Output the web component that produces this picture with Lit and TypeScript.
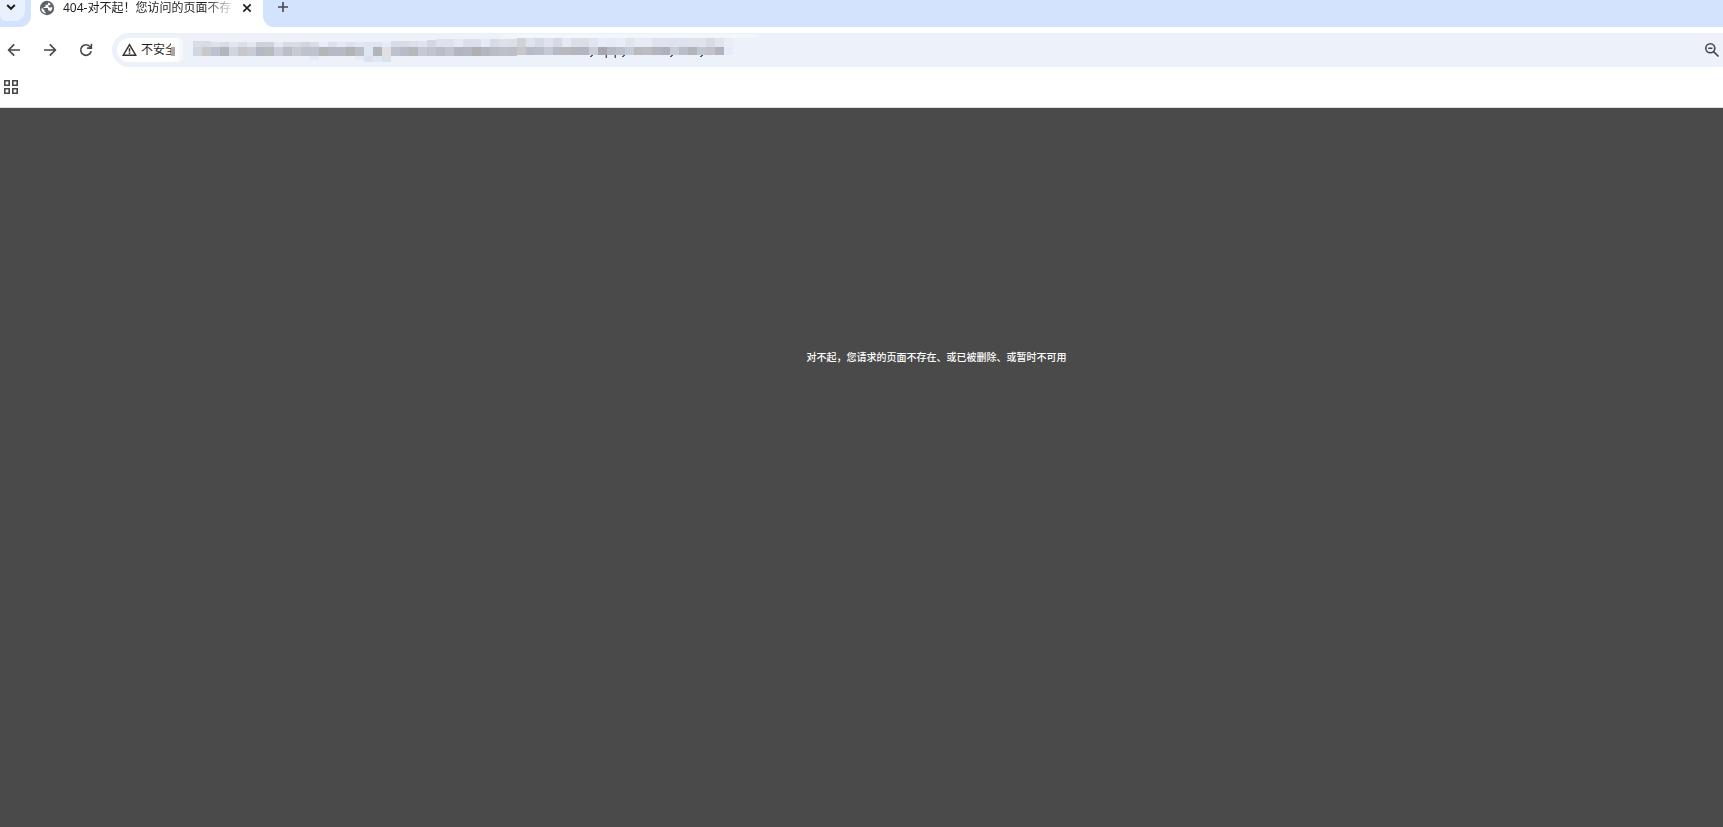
import { LitElement, html, svg, css } from "lit";
import { customElement } from "lit/decorators.js";

const CELL = 9;

// One column per cell: top edge, upper colour, main colour.
const UPPER_TOPS = [5,5,6,6,6,6,6,6,6,6,6,6,6,6,6,6,6,6,6,6,6,6,5,5,5,5,4,3,3,3,3,3,3,3,3,3,2,2,2,2,2,2,2,2,2,2,2,2,2,2,2,2,2,2,2,2,2,2,2,2];
const UPPER = ("d9dde5 d8dbe3 dde1ea d8dce5 e2e6f0 dadee7 e3e7f1 cdd1da cfd3dc e4e8f2 d7dbe4 d8dce5 d2d6df d9dde7 e8ecf8 dce1eb e5e9f5 dde1eb e3e7f1 dfe6f3 " +
  "dfe4ee e5ebf7 d8dce6 d8dce6 dce0ea dee3ee d3d7e1 dee2ec dde2ec e5e9f5 dadfe9 dadfe9 e5eaf7 d7dbe5 dde1eb dcdfe8 d2d3d9 dfe3ee d6dae4 dee3ee " +
  "d6dae4 e6e9f3 dcdfe8 dadee7 dde5ef e7ecf8 e5eaf5 e8edf9 dfe4ed e7ebf6 e7ebf6 dfe3ed dfe3ed dde2ee dde2ee dee3ed dfe3ed d8dbe4 e0e4ed e8edf8").split(" ");
const MAIN = ("d2d6de cac9ca bcc2cd b1b5be d1d5de c6c6cb c8ccd5 b4b9c3 b9bcbf cacdd8 babec8 c8cad1 bec2cc bec2cc b5b6b7 b5bac5 b5bac5 b2b3b6 babec9 dfe6f3 " +
  "b1b4b9 dfdfe4 bdc2cc b8bcc7 b5b7bb c7cad4 c0c4ce babdc8 c2c5cb b3b6c0 b4b8c3 b0afb2 b1b6c1 b9bcc1 bdc0c7 bcbfc6 c9c6ca b5bbc8 babec9 c4c9d5 " +
  "b7bac4 b7b9bd b4b6bb b3b6c0 cbced6 a8a5ad b5b9c3 bac1ca c5cbd8 b8babb bbbdc3 b4b6bd aeb1bb c9cdd4 b8bdc9 b2b4ba c0c7d0 c1c3c9 b1b4be e6ebf7").split(" ");
const LOWER: [number, string][] = [[13, "e6eaf5"], [18, "e6ebf6"], [19, "dce1ec"], [20, "e0e8f2"], [21, "dce2ec"]];
const COMMAS = [398, 430, 478, 508];
const STEMS = [413, 422];

@customElement("app-root")
export class AppRoot extends LitElement {
  static styles = css`
    :host {
      display: flex;
      flex-direction: column;
      min-height: 100vh;
      background: #fff;
      color: #1f1f1f;
      font: 12px/16px "Noto Sans", "Noto Sans CJK SC", sans-serif;
    }
    button {
      display: grid;
      place-items: center;
      flex: none;
      padding: 0;
      border: 0;
      background: none;
      color: #474747;
      font: inherit;
    }
    svg { display: block; flex: none; }
    .strip { display: flex; height: 27px; }
    .before, .after { background: #d3e3fd; }
    .before { width: 31px; flex: none; border-radius: 0 0 11px 0; }
    .after { flex: 1; border-radius: 0 0 0 11px; padding-left: 10px; }
    .search {
      width: 25px;
      height: 21px;
      padding-right: 3px;
      padding-bottom: 7px;
      border-radius: 0 0 10px 6px;
      background: #e9f1fe;
      color: #1f1f1f;
    }
    .new { width: 20px; height: 14px; }
    .tab {
      display: flex;
      align-items: center;
      flex: none;
      width: 224px;
      height: 15px;
      padding: 0 0 0 8px;
    }
    .title {
      width: 168px;
      margin: 0 8px;
      white-space: nowrap;
      mask-image: linear-gradient(to right, #000 142px, transparent 172px);
    }
    .close { width: 16px; height: 15px; color: #1f1f1f; }
    .toolbar { display: flex; align-items: center; padding: 6px 0 0 4px; }
    .nav { display: flex; gap: 16px; margin-right: 16px; }
    .nav button { width: 20px; height: 20px; }
    .address {
      display: flex;
      align-items: center;
      flex: 1;
      height: 34px;
      padding: 0 2px 0 5px;
      border-radius: 17px 0 0 17px;
      background: #ecf1fa;
    }
    .chip {
      position: relative;
      width: 66px;
      height: 24px;
      display: flex;
      gap: 4px;
      padding-left: 5px;
      border-radius: 12px 5px 5px 12px;
      background: linear-gradient(to right, #fff 58px, #f6f8fc 58px);
      color: #1f1f1f;
    }
    .chip::after {
      content: "";
      position: absolute;
      left: 54px;
      top: 0;
      width: 8px;
      height: 24px;
      background: linear-gradient(#fff 9px, #a6a6a8 9px 18px, #fff 18px) 0 0 / 4px 24px no-repeat, #fbfcfe;
    }
    .chip svg { color: #333; }
    .safety { width: 36px; white-space: nowrap; }
    .redacted { margin-left: 10px; }
    .zoom { width: 18px; height: 20px; margin-left: auto; }
    .bookmarks {
      display: flex;
      height: 40px;
      padding-left: 2px;
      align-items: center;
      border-bottom: 1px solid #dfe0e0;
    }
    .bookmarks button { width: 18px; height: 18px; }
    main {
      flex: 1;
      padding: 241px 0 0 150px;
      background: #4a4a4a;
      color: #fff;
      text-align: center;
    }
    h1 { margin: 0; font-size: 10px; line-height: 16px; font-weight: 500; }
  `;

  private mosaic() {
    return svg`
      <rect x="310" y="1" width="253" height="4" rx="2" fill="#f2f6fd" />
      ${UPPER.map((c, i) => svg`<rect x=${i * CELL} y=${UPPER_TOPS[i] + 3} width=${CELL} height=${11 - UPPER_TOPS[i]} fill=${"#" + c} />`)}
      ${MAIN.map((c, i) => svg`<rect x=${i * CELL} y="14" width=${CELL} height=${i < 36 ? 9 : 8} fill=${"#" + c} />`)}
      ${LOWER.map(([i, c]) => svg`<rect x=${i * CELL} y="23" width=${CELL} height=${i < 19 ? 4 : 6} fill=${"#" + c} />`)}
      ${COMMAS.map((x) => svg`<path d="M${x} 22h2v1h-1v1h-2v-1h1z" fill="#4c5874" />`)}
      ${STEMS.map((x) => svg`<rect x=${x - 1} y="22" width="1" height="3" fill="#d2b08a" /><rect x=${x} y="22" width="1" height="3" fill="#40567f" />`)}
    `;
  }

  render() {
    return html`
      <div class="strip">
        <div class="before">
          <button class="search" aria-label="搜索标签页">
            <svg width="10" height="8" viewBox="0 0 10 8" fill="none" stroke="currentColor" stroke-width="2"><path d="M1.2 2 5 5.8 8.8 2" /></svg>
          </button>
        </div>
        <div class="tab">
          <svg width="16" height="16" viewBox="0 0 16 16"><circle cx="8" cy="8" r="7.2" fill="#5f6368" /><path d="M9.200 2.500v1c0 .8-.6 1.300-1.400 1.300H6.600v1.300c0 .5-.3.800-.7.800H4.700v1.200h3.600c.5 0 .8.300.8.800v1.700h.8c.6 0 1.100.4 1.300 1A5.500 5.500 0 0 0 13.400 8l-.2-1c-.4.3-.9.4-1.400.4h-1.200c-.8 0-1.300-.6-1.300-1.300v-.8h2V3.500A6 6 0 0 0 9.200 2.500ZM2.500 7.500 5.500 10.300v.7c0 .8.5 1.400 1.300 1.400v1.100A5.500 5.500 0 0 1 2.500 7.500Z" fill="#fff" /></svg>
          <span class="title">404-对不起！您访问的页面不存</span>
          <button class="close" aria-label="关闭">
            <svg width="10" height="10" viewBox="0 0 10 10" stroke="currentColor" stroke-width="1.7"><path d="m1.300 1.300 7.400 7.400M8.700 1.300 1.300 8.700" /></svg>
          </button>
        </div>
        <div class="after">
          <button class="new" aria-label="新标签页">
            <svg width="12" height="12" viewBox="0 0 12 12" stroke="currentColor" stroke-width="1.6"><path d="M6 1v10M1 6h10" /></svg>
          </button>
        </div>
      </div>
      <div class="toolbar">
        <nav class="nav">
          <button aria-label="后退"><svg width="14" height="14" viewBox="0 0 14 14" fill="none" stroke="currentColor" stroke-width="1.6"><path d="M13 7H2M7.200 1.400 1.600 7l5.600 5.600" /></svg></button>
          <button aria-label="前进"><svg width="14" height="14" viewBox="0 0 14 14" fill="none" stroke="currentColor" stroke-width="1.6"><path d="M1 7h11M6.800 1.400 12.400 7l-5.600 5.600" /></svg></button>
          <button aria-label="重新加载"><svg width="14" height="14" viewBox="0 0 14 14" fill="none" stroke="currentColor" stroke-width="1.6"><path d="M12.200 8.200A5.300 5.300 0 1 1 11.300 3.900L12.400 5M12.400 .8V5.100H8.100" /></svg></button>
        </nav>
        <div class="address">
          <button class="chip">
            <svg width="15" height="14" viewBox="0 0 15 14" fill="none" stroke="currentColor" stroke-width="1.5"><path d="M7.500 1.700 13.700 12.200H1.300ZM7.500 5.300V8.800M7.500 9.600V11" /></svg>
            <span class="safety">不安全</span>
          </button>
          <svg class="redacted" width="564" height="34" viewBox="0 0 564 34" aria-hidden="true">${this.mosaic()}</svg>
          <button class="zoom" aria-label="缩放">
            <svg width="16" height="16" viewBox="0 0 16 16" fill="none" stroke="currentColor" stroke-width="1.6"><circle cx="6.300" cy="6.300" r="4.500" /><path d="M9.600 9.600 14.500 14.500M4.200 6.300h4.200" /></svg>
          </button>
        </div>
      </div>
      <div class="bookmarks">
        <button aria-label="应用">
          <svg width="14" height="14" viewBox="0 0 14 14" fill="none" stroke="currentColor" stroke-width="1.6"><path d="M.8.8h4.400v4.400H.8zM8.800.8h4.400v4.400H8.800zM.8 8.800h4.400v4.400H.8zM8.800 8.800h4.400v4.400H8.800z" /></svg>
        </button>
      </div>
      <main><h1>对不起，您请求的页面不存在、或已被删除、或暂时不可用</h1></main>
    `;
  }
}
